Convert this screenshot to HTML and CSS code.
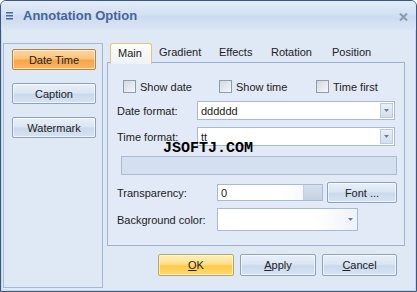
FILE: index.html
```html
<!DOCTYPE html>
<html>
  <head>
    <meta charset="utf-8" />
    <title>Annotation Option</title>
    <link rel="stylesheet" href="styles.css">
  </head>
  <body>
    <div class="window">
      <div class="titlebar">
        <svg class="menu-icon" width="8" height="8" viewBox="0 0 8 8">
          <rect x="0" y="0" width="7" height="1.5" fill="#4a6a96" />
          <rect x="0" y="3" width="7" height="1.5" fill="#4a6a96" />
          <rect x="0" y="6" width="7" height="1.5" fill="#4a6a96" />
        </svg>
        <span class="title">Annotation Option</span>
        <svg class="close" width="9" height="8" viewBox="0 0 9 8">
          <path d="M1 0.5 L8 7.5 M8 0.5 L1 7.5" stroke="#8a98ab" stroke-width="2" />
        </svg>
      </div>

      <div class="content">
        <div class="sidebar">
          <button class="side-btn active" type="button">Date Time</button>
          <button class="side-btn" type="button">Caption</button>
          <button class="side-btn" type="button">Watermark</button>
        </div>

        <div class="main">
          <div class="tabs">
            <div class="tab tab-main active">Main</div>
            <div class="tab tab-gradient">Gradient</div>
            <div class="tab tab-effects">Effects</div>
            <div class="tab tab-rotation">Rotation</div>
            <div class="tab">Position</div>
          </div>

          <div class="panel">
            <div class="checks">
              <label class="check"><span class="box"></span>Show date</label>
              <label class="check"><span class="box"></span>Show time</label>
              <label class="check"><span class="box"></span>Time first</label>
            </div>

            <div class="row row-date">
              <span class="label">Date format:</span>
              <div class="field combo">
                <span class="value">dddddd</span>
                <span class="drop-btn"><svg width="5" height="3" viewBox="0 0 5 3"><path d="M0 0 H5 L2.5 3 Z" fill="#6d7d93" /></svg></span>
              </div>
            </div>

            <div class="row row-time">
              <span class="label">Time format:</span>
              <div class="field combo">
                <span class="value">tt</span>
                <span class="drop-btn"><svg width="5" height="3" viewBox="0 0 5 3"><path d="M0 0 H5 L2.5 3 Z" fill="#6d7d93" /></svg></span>
              </div>
            </div>

            <div class="preview"></div>

            <div class="row row-transparency">
              <span class="label">Transparency:</span>
              <div class="field spin">
                <span class="value">0</span>
                <span class="spin-btn"></span>
              </div>
              <button class="btn font-btn" type="button">Font ...</button>
            </div>

            <div class="row row-bg">
              <span class="label">Background color:</span>
              <div class="field color-combo">
                <svg width="5" height="3" viewBox="0 0 5 3"><path d="M0 0 H5 L2.5 3 Z" fill="#6d7d93" /></svg>
              </div>
            </div>

            <div class="watermark">JSOFTJ.COM</div>
          </div>

          <div class="actions">
            <button class="btn ok-btn" type="button"><u>O</u>K</button>
            <button class="btn" type="button"><u>A</u>pply</button>
            <button class="btn cancel-btn" type="button"><u>C</u>ancel</button>
          </div>
        </div>
      </div>
    </div>
  </body>
</html>
```

FILE: styles.css
```css
/* Office 2007 style dialog */
body {
  margin: 0;
  font-family: "Liberation Sans", Arial, sans-serif;
  font-size: 11px;
  color: #222;
}
.window {
  width: 417px;
  height: 292px;
  box-sizing: border-box;
  border: 1px solid #3b5680;
  border-radius: 6px 6px 0 0;
  background-color: #dfe9f5;
  box-shadow: inset 0 0 0 1px #c5d5ea;
  overflow: hidden;
}
.titlebar {
  height: 29px;
  display: flex;
  align-items: center;
  padding: 0 8px 0 5px;
  background: linear-gradient(#e3ecf8, #d3e1f3 45%, #cbdbf0 55%, #dbe6f5);
}
.menu-icon {
  margin-top: 1px;
}
.title {
  margin-left: 9px;
  font-size: 13px;
  font-weight: bold;
  color: #46659a;
  flex: 1;
}
.close {
  margin-top: 2px;
}
.content {
  display: flex;
  padding: 13px 0 0 2px;
}
.sidebar {
  width: 100px;
  height: 245px;
  box-sizing: border-box;
  border: 1px solid #a6bad6;
  padding: 5px 0 0 8px;
  display: flex;
  flex-direction: column;
  gap: 13px;
}
.side-btn, .btn {
  font-family: "Liberation Sans", Arial, sans-serif;
  font-size: 11px;
  color: #222;
  border: 1px solid #8da2bf;
  border-radius: 2px;
  background: linear-gradient(#e8eff9, #dbe6f4 45%, #cad9ed 55%, #d7e3f2);
  box-shadow: inset 0 0 0 1px rgba(255, 255, 255, 0.6);
  padding: 0;
}
.side-btn {
  width: 84px;
  height: 21px;
}
.side-btn.active {
  border-color: #c0813a;
  background: linear-gradient(#fdd7a4, #fbc27a 45%, #f8a648 55%, #fbb560);
}
.main {
  margin-left: 4px;
}
.tabs {
  display: flex;
  height: 19px;
  padding-left: 3px;
}
.tab {
  padding: 3px 7px 0 7px;
  height: 16px;
}
.tab-main {
  width: 26px;
}
.tab-gradient {
  width: 46px;
}
.tab-effects {
  width: 38px;
}
.tab-rotation {
  width: 47px;
}
.tab.active {
  border: 1px solid #e2c47c;
  border-bottom: none;
  border-radius: 3px 3px 0 0;
  background: linear-gradient(#fdfdf8, #eef2f8);
  height: 17px;
  position: relative;
  z-index: 1;
}
.panel {
  position: relative;
  width: 298px;
  height: 184px;
  box-sizing: border-box;
  border: 1px solid #9db2cf;
  background-color: #e1eaf6;
}
.checks {
  display: grid;
  grid-template-columns: 96px 97px auto;
  padding: 17px 0 0 15px;
}
.check {
  display: flex;
  align-items: center;
  gap: 4px;
  height: 13px;
}
.box {
  width: 11px;
  height: 11px;
  border: 1px solid #8e9cb2;
  background: linear-gradient(135deg, #d4d8de, #f6f7f9);
}
.row {
  display: flex;
  align-items: center;
  padding-left: 9px;
}
.label {
  width: 80px;
}
.row-date {
  margin-top: 8px;
}
.row-time {
  margin-top: 7px;
}
.field {
  box-sizing: border-box;
  border: 1px solid #a7b9d3;
  background-color: #fff;
  display: flex;
  align-items: center;
}
.combo {
  width: 198px;
  height: 19px;
  padding-left: 3px;
}
.value {
  flex: 1;
}
.drop-btn {
  width: 13px;
  height: 15px;
  margin-right: 1px;
  box-sizing: border-box;
  border: 1px solid #bccbe0;
  background: linear-gradient(#e9eff8, #d2deee);
  display: flex;
  align-items: center;
  justify-content: center;
}
.preview {
  margin: 10px 0 0 13px;
  width: 276px;
  height: 19px;
  box-sizing: border-box;
  border: 1px solid #a9bbd4;
  background-color: #d4e0ef;
}
.row-transparency {
  margin-top: 7px;
  height: 21px;
}
.row-transparency .label {
  width: 100px;
}
.spin {
  width: 106px;
  height: 17px;
  padding-left: 3px;
  background: linear-gradient(90deg, #ffffff 60%, #eef3fa);
}
.spin-btn {
  width: 18px;
  height: 15px;
  background: linear-gradient(#d6e0ec, #c5d2e3);
  border-left: 1px solid #c3cfdf;
}
.font-btn {
  width: 70px;
  height: 21px;
  margin-left: 4px;
}
.row-bg {
  margin-top: 5px;
}
.row-bg .label {
  width: 100px;
}
.color-combo {
  width: 141px;
  height: 23px;
  justify-content: flex-end;
  padding-right: 4px;
  background: linear-gradient(90deg, #ffffff 70%, #eef3fa);
}
.watermark {
  position: absolute;
  left: 55px;
  top: 77px;
  font-family: "Liberation Mono", monospace;
  font-weight: bold;
  font-size: 15px;
  color: #000;
}
.actions {
  display: flex;
  gap: 6px;
  margin: 8px 0 0 51px;
}
.actions .btn {
  width: 76px;
  height: 22px;
}
.actions .cancel-btn {
  width: 75px;
}
.actions .ok-btn {
  border-color: #c3a559;
  background: linear-gradient(#fff0bd, #ffe08a 45%, #fdcb48 55%, #fed872);
}
```
